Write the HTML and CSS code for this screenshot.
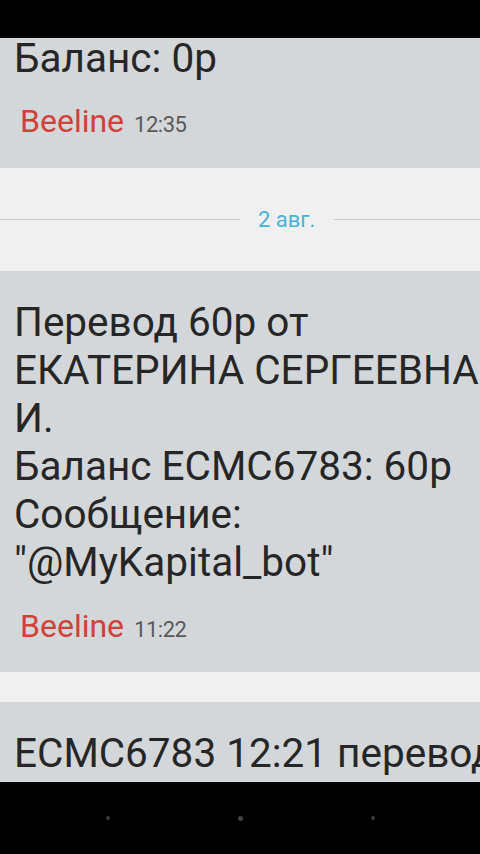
FILE: index.html
```html
<!DOCTYPE html>
<html lang="ru">
<head>
    <meta charset="UTF-8">
    <meta name="viewport" content="width=device-width, initial-scale=1.0">
    <title>Сообщения</title>
    <link rel="stylesheet" href="styles.css">
</head>
<body>

    <div class="status-bar"></div>

    <div class="thread">
        <div class="card card-first">
            <div class="msg-text">Баланс: 0р</div>
            <div class="msg-meta">
                <span class="sender">Beeline</span>
                <span class="time">12:35</span>
            </div>
        </div>

        <!-- Date separator -->
        <div class="date-sep">
            <div class="date-line date-line-left"></div>
            <span class="date-label">2 авг.</span>
            <div class="date-line"></div>
        </div>

        <div class="card">
            <div class="msg-text">Перевод 60р от<br>ЕКАТЕРИНА СЕРГЕЕВНА<br>И.<br>Баланс ЕСМС6783: 60р<br>Сообщение:<br>"@MyKapital_bot"</div>
            <div class="msg-meta">
                <span class="sender">Beeline</span>
                <span class="time">11:22</span>
            </div>
        </div>

        <div class="gap"></div>

        <div class="card card-last">
            <div class="msg-text">ЕСМС6783 12:21 перевод</div>
        </div>
    </div>

    <div class="nav-bar">
        <span class="nav-dot"></span>
        <span class="nav-dot nav-dot-big"></span>
        <span class="nav-dot"></span>
    </div>

</body>
</html>
```

FILE: styles.css
```css
* { box-sizing: border-box; }
body {
    margin: 0;
    width: 480px;
    height: 854px;
    font-family: Roboto, "Noto Sans", sans-serif;
    background: #f0f0f0;
    display: flex;
    flex-direction: column;
    overflow: hidden;
}
.status-bar { height: 38px; background: #000; flex: none; }
.thread {
    flex: 1;
    overflow: hidden;
    display: flex;
    flex-direction: column;
}
.card {
    background: #d4d7da;
    padding: 27px 0 26px 14px;
    flex: none;
}
.card-first { padding-top: 0; padding-bottom: 27px; }
.card-first .msg-text { line-height: 40px; }
.card-first .msg-meta { margin-top: 27px; }
.card-last { flex: 1; padding-bottom: 0; }
.msg-text {
    font-size: 40.5px;
    line-height: 48px;
    color: #262626;
    white-space: nowrap;
}
.msg-meta {
    margin: 24px 0 0 6px;
    display: flex;
    align-items: baseline;
    gap: 10px;
    line-height: 32px;
}
.sender { font-size: 32px; color: #d0413a; }
.time { font-size: 22px; color: #595959; letter-spacing: -0.5px; }
.gap { height: 30px; flex: none; }
.date-sep {
    height: 103px;
    flex: none;
    display: flex;
    align-items: center;
}
.date-line { flex: 1; height: 1px; background: #c9c9c9; }
.date-line-left { flex: none; width: 240px; }
.date-label {
    font-size: 22px;
    color: #4ab2d8;
    padding: 0 19px 0 18px;
}
.nav-bar {
    height: 72px;
    flex: none;
    background: #000;
    display: flex;
    justify-content: center;
    align-items: center;
    gap: 128px;
}
.nav-dot { width: 4px; height: 4px; border-radius: 50%; background: #3a3a3a; }
.nav-dot-big { width: 5px; height: 5px; background: #444; }
```
